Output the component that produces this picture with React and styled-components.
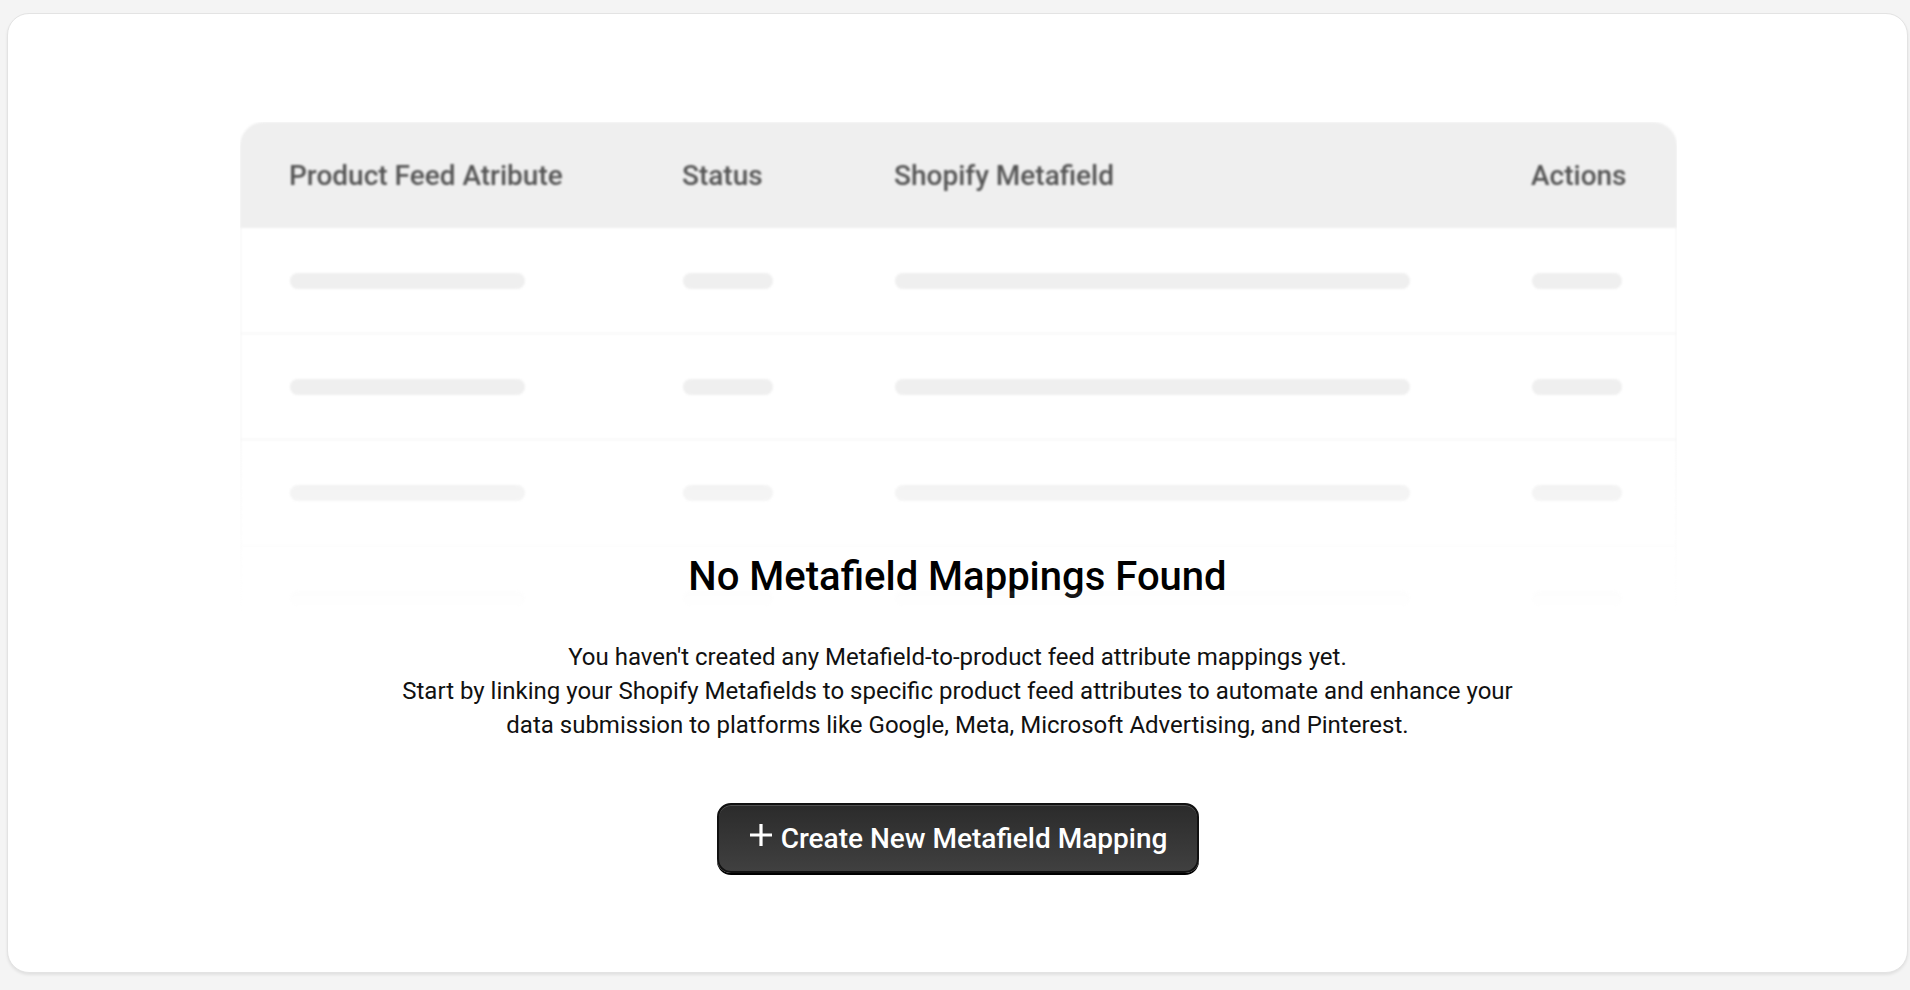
import React from "react";
import styled, { createGlobalStyle } from "styled-components";

const Global = createGlobalStyle`
  html, body {
    margin: 0;
    background: #f4f4f4;
    font-family: Roboto, "Liberation Sans", sans-serif;
  }
`;

const Page = styled.div`
  padding: 13px 2px 17px 7px;
`;

const Card = styled.div`
  box-sizing: border-box;
  height: 960px;
  background: #fff;
  border: 1px solid #e3e3e3;
  border-radius: 22px;
  box-shadow: 0 2px 3px rgba(0, 0, 0, 0.08);
  padding-top: 108px;
  display: flex;
  justify-content: center;
`;

const Stack = styled.div`
  display: grid;
  width: 100%;
  & > * {
    grid-area: 1 / 1;
  }
`;

const Preview = styled.div`
  justify-self: start;
  margin-left: 232px;
  width: 1437px;
  filter: blur(0.9px);
  -webkit-mask-image: linear-gradient(to bottom, #000 0, #000 320px, transparent 490px);
  mask-image: linear-gradient(to bottom, #000 0, #000 320px, transparent 490px);
`;

const Cols = styled.div`
  display: grid;
  grid-template-columns: 393px 212px 637px 1fr;
  align-items: center;
  padding: 0 49px;
`;

const Head = styled(Cols)`
  height: 106px;
  background: #efefef;
  border-radius: 24px 24px 0 0;
  color: #555;
  font-size: 28px;
  font-weight: 500;
`;

const Row = styled(Cols)`
  height: 105px;
  border: 1px solid #f2f2f2;
  border-top: none;
`;

const Bar = styled.div`
  width: ${(p) => p.w}px;
  height: 16px;
  border-radius: 8px;
  background: #efefef;
`;

const Message = styled.div`
  align-self: start;
  margin-top: 431px;
  display: flex;
  flex-direction: column;
  align-items: center;
  text-align: center;
`;

const Title = styled.h2`
  margin: 0;
  font-size: 40px;
  line-height: 48px;
  font-weight: 500;
  color: #000;
`;

const Text = styled.p`
  margin: 39px 0 0;
  font-size: 24px;
  line-height: 34px;
  color: #111;
`;

const Button = styled.button`
  margin-top: 61px;
  box-sizing: border-box;
  width: 482px;
  height: 70px;
  display: flex;
  align-items: center;
  justify-content: center;
  gap: 7px;
  border: 2px solid #111;
  border-radius: 14px;
  background: linear-gradient(#2b2b2b, #404040);
  box-shadow: inset 0 1px 0 rgba(255, 255, 255, 0.18), 0 2px 0 #000;
  color: #fff;
  font-family: Roboto, "Liberation Sans", sans-serif;
  font-size: 28px;
  font-weight: 500;
  cursor: pointer;
  svg {
    margin-top: -6px;
  }
`;

const rows = [0, 1, 2, 3];

export default function App() {
  return (
    <Page>
      <Global />
      <Card>
        <Stack>
          <Preview>
            <Head>
              <div>Product Feed Atribute</div>
              <div>Status</div>
              <div>Shopify Metafield</div>
              <div>Actions</div>
            </Head>
            {rows.map((r) => (
              <Row key={r}>
                <Bar w={235} />
                <Bar w={90} />
                <Bar w={515} />
                <Bar w={90} />
              </Row>
            ))}
          </Preview>
          <Message>
            <Title>No Metafield Mappings Found</Title>
            <Text>
              You haven't created any Metafield-to-product feed attribute mappings yet.
              <br />
              Start by linking your Shopify Metafields to specific product feed attributes to automate and enhance your
              <br />
              data submission to platforms like Google, Meta, Microsoft Advertising, and Pinterest.
            </Text>
            <Button>
              <svg width="26" height="26" viewBox="0 0 26 26">
                <path d="M13 2v22M2 13h22" stroke="#fff" strokeWidth="3.2" fill="none" />
              </svg>
              Create New Metafield Mapping
            </Button>
          </Message>
        </Stack>
      </Card>
    </Page>
  );
}
